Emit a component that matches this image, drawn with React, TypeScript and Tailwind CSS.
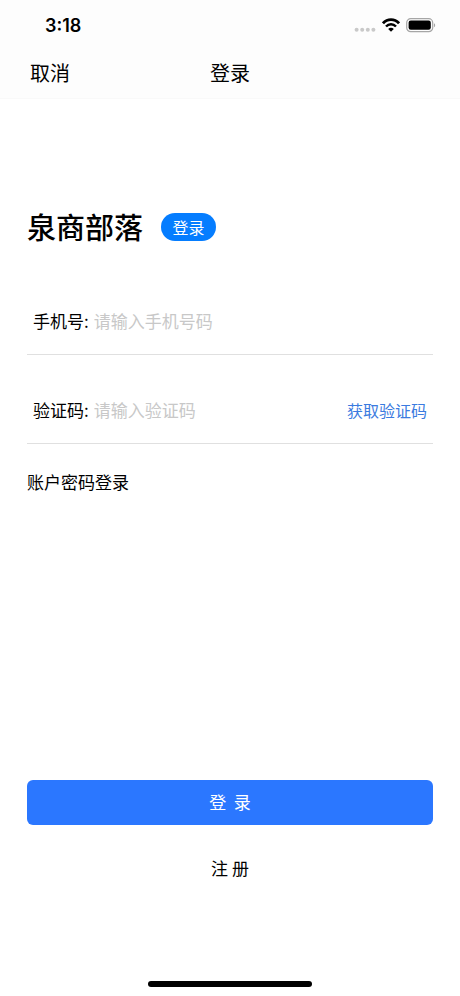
import type { ReactNode } from 'react';

function StatusBar() {
  return (
    <div className="flex h-[50px] items-center justify-between pr-6 pl-[45px]">
      <span className="pt-[2px] font-['Inter','Liberation_Sans',sans-serif] text-lg leading-6 font-semibold">3:18</span>
      <div className="flex items-center gap-[6px]">
        <svg className="h-[18px] w-[22px]" viewBox="0 0 22 18" fill="#c9c9c9" aria-hidden="true">
          <circle cx="2.6" cy="13.8" r="2" />
          <circle cx="8.2" cy="13.8" r="2" />
          <circle cx="13.8" cy="13.8" r="2" />
          <circle cx="19.4" cy="13.8" r="2" />
        </svg>
        <svg className="h-[18px] w-[18px]" viewBox="0 0 18 18" fill="none" aria-hidden="true">
          <path d="M1 7.3C5.5 2.4 12.5 2.4 17 7.3" stroke="#000" strokeWidth="2.8" />
          <path d="M4 10.5C6.8 7.5 11.2 7.5 14 10.5" stroke="#000" strokeWidth="2.5" />
          <path d="M9 15.8L6.2 13C7.8 11.4 10.2 11.4 11.8 13Z" fill="#000" />
        </svg>
        <svg className="h-[18px] w-[30px]" viewBox="0 0 30 18" fill="none" aria-hidden="true">
          <rect x="0.7" y="2.7" width="26" height="13" rx="4" stroke="#a6a6a6" strokeWidth="1.2" />
          <rect x="2.6" y="4.6" width="22.2" height="9.2" rx="2.2" fill="#000" />
          <path d="M28 7.2C29.6 7.9 29.6 10.5 28 11.2Z" fill="#a6a6a6" />
        </svg>
      </div>
    </div>
  );
}

type FieldProps = { id: string; label: string; placeholder: string; type: string; children?: ReactNode };

function Field({ id, label, placeholder, type, children }: FieldProps) {
  return (
    <div className="flex h-[65px] items-center border-b border-[#e0e0e0] px-[6px] pb-[2px]">
      <label htmlFor={id} className="shrink-0 text-[17px] leading-6">{label}</label>
      <input
        id={id}
        type={type}
        placeholder={placeholder}
        className="ml-[5px] h-8 min-w-0 flex-1 bg-transparent pb-[2px] text-[17px] leading-6 outline-none placeholder:text-[#c8c8c8]"
      />
      {children}
    </div>
  );
}

export default function App() {
  return (
    <div className="flex min-h-screen flex-col bg-white font-['Noto_Sans_CJK_SC',sans-serif] text-black">
      <header className="border-b border-[#f9f9f9] bg-[#fdfdfd]">
        <StatusBar />
        <div className="grid h-12 grid-cols-3 items-center px-[30px] pb-[2px] text-xl leading-6">
          <button type="button" className="justify-self-start">取消</button>
          <h1 className="text-center">登录</h1>
        </div>
      </header>

      <form className="flex flex-1 flex-col px-[27px] pt-[108px]" onSubmit={(e) => e.preventDefault()}>
        <div className="flex h-10 items-center gap-[18px]">
          <h2 className="pb-[2px] text-[29px] leading-10 font-medium">泉商部落</h2>
          <span className="flex h-7 w-[55px] items-center justify-center rounded-full bg-[#057dff] text-base leading-6 text-white">登录</span>
        </div>

        <div className="mt-[43px] flex flex-col gap-6">
          <Field id="phone" type="tel" label="手机号:" placeholder="请输入手机号码" />
          <Field id="code" type="text" label="验证码:" placeholder="请输入验证码">
            <button type="button" className="shrink-0 text-base leading-6 text-[#3b7be0]">获取验证码</button>
          </Field>
        </div>
        <a href="#password" className="mt-[26px] self-start text-[17px] leading-6">账户密码登录</a>

        <div className="min-h-8 flex-1" />

        <button type="submit" className="h-[45px] rounded-md bg-[#2b77ff] pb-[2px] text-[17px] leading-6 whitespace-pre text-white">{'登  录'}</button>
        <button type="button" className="mt-[31px] self-center text-[17px] leading-6">注 册</button>
      </form>

      <div className="flex justify-center pt-[101px] pb-[9px]">
        <div className="h-[6px] w-[164px] rounded-full bg-black" />
      </div>
    </div>
  );
}
